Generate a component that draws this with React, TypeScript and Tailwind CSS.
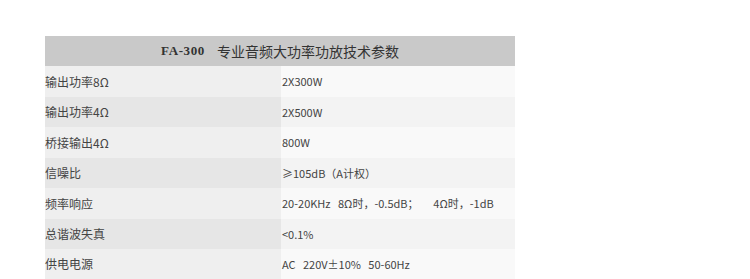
const rows: [string, string][] = [
  ['输出功率8Ω', '2X300W'],
  ['输出功率4Ω', '2X500W'],
  ['桥接输出4Ω', '800W'],
  ['信噪比', '≥105dB（A计权）'],
  ['频率响应', '20-20KHz\u00a0\u00a0 8Ω时，-0.5dB；\u00a0\u00a0\u00a0\u00a0\u00a0 4Ω时，-1dB'],
  ['总谐波失真', '<0.1%'],
  ['供电电源', 'AC\u00a0\u00a0 220V±10%\u00a0\u00a0 50-60Hz'],
];

const heights = ['h-[31px]', 'h-[30px]', 'h-[31px]', 'h-[30px]', 'h-[31px]', 'h-[30px]', 'h-[30px]'];

export default function App() {
  return (
    <div className="w-[750px] h-[279px] bg-white overflow-hidden pt-[36px] pl-[45px] font-['SimSun','Noto_Sans_CJK_SC',sans-serif] text-[12px] text-[#444]">
      <div className="w-[470px]">
        <div className="h-[30px] bg-[#c9c9c9] flex items-center justify-center text-[14px] text-[#333]">
          <span className="font-bold font-['Liberation_Serif',serif] text-[13px] tracking-[0.6px] mr-[12px]">FA-300</span>
          <span>专业音频大功率功放技术参数</span>
        </div>
        {rows.map(([label, value], i) => (
          <div key={label} className={`flex ${heights[i]}`}>
            <div
              className={`w-[236px] flex items-center ${i % 2 === 0 ? 'bg-[#efefef]' : 'bg-[#e6e6e6]'}`}
            >
              {label}
            </div>
            <div
              className={`flex-1 flex items-center pl-[1px] whitespace-nowrap text-[11px] ${i % 2 === 0 ? 'bg-[#f9f9f9]' : 'bg-[#f3f3f3]'}`}
            >
              {value}
            </div>
          </div>
        ))}
      </div>
    </div>
  );
}
